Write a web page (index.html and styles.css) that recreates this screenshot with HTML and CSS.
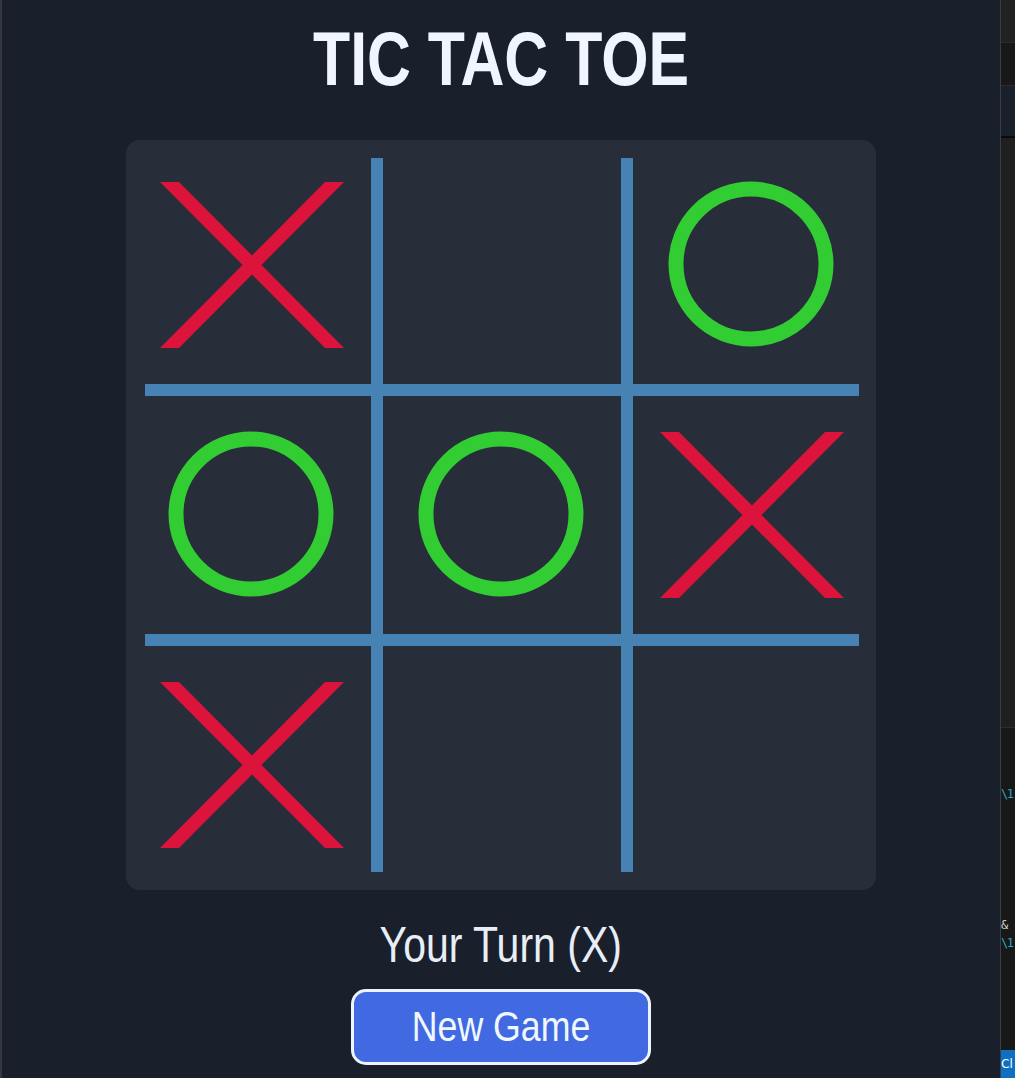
FILE: index.html
```html
<!DOCTYPE html>
<html lang="en">
<head>
<meta charset="utf-8">
<title>Tic Tac Toe</title>
<link rel="stylesheet" href="styles.css">
</head>
<body>
<div class="edge-left"></div>
<main class="app">
  <h1 class="title"><span class="narrow narrow-bold">TIC TAC TOE</span></h1>
  <div class="board">
    <svg class="board-svg" width="750" height="750" viewBox="0 0 750 750" xmlns="http://www.w3.org/2000/svg">
      <g fill="#4682b4">
        <rect x="245" y="18" width="12" height="714"/>
        <rect x="495" y="18" width="12" height="714"/>
        <rect x="19" y="244" width="714" height="12"/>
        <rect x="19" y="494" width="714" height="12"/>
      </g>
      <defs>
        <g id="xmark" fill="#dc143c">
          <polygon points="-92,-83 -73,-83 92,83 73,83"/>
          <polygon points="73,-83 92,-83 -73,83 -92,83"/>
        </g>
        <circle id="omark" r="75" fill="none" stroke="#32cd32" stroke-width="15"/>
      </defs>
      <use href="#xmark" x="126" y="125"/>
      <use href="#omark" x="625" y="124"/>
      <use href="#omark" x="125" y="374"/>
      <use href="#omark" x="375" y="374"/>
      <use href="#xmark" x="626" y="375"/>
      <use href="#xmark" x="126" y="625"/>
    </svg>
  </div>
  <p class="status"><span class="narrow">Your Turn (X)</span></p>
  <button class="new-game" type="button"><span class="narrow narrow-btn">New Game</span></button>
</main>
<aside class="side">
  <div class="band band-a"></div>
  <div class="band band-b"></div>
  <div class="band band-c"></div>
  <div class="band band-d">
    <span class="code c1">\1</span>
    <span class="code c2">&amp;</span>
    <span class="code c3">\1</span>
  </div>
  <div class="statusbar">Cl</div>
</aside>
</body>
</html>
```

FILE: styles.css
```css
html, body {
  margin: 0;
  padding: 0;
  height: 100%;
}

body {
  display: flex;
  width: 1015px;
  height: 1078px;
  overflow: hidden;
  background: #1a1f2c;
  font-family: "Liberation Sans", Arial, sans-serif;
}

.edge-left {
  width: 2px;
  flex: 0 0 2px;
  background: #34373e;
}

.app {
  flex: 0 0 998px;
  display: flex;
  flex-direction: column;
  align-items: center;
  padding-top: 21px;
  box-sizing: border-box;
}

.narrow {
  display: inline-block;
  white-space: nowrap;
  transform: scaleX(0.82);
}

.narrow-bold {
  transform: scaleX(0.8);
}

.narrow-btn {
  transform: scaleX(0.85);
}

.title {
  margin: 0 0 43px;
  font-size: 76px;
  line-height: 1;
  font-weight: 700;
  color: #f0f6ff;
}

.board {
  width: 750px;
  height: 750px;
  background: #282d3a;
  border-radius: 14px;
}

.board-svg {
  display: block;
}

.status {
  margin: 30px 0 19px;
  font-size: 50px;
  line-height: 1;
  color: #e8eef6;
}

.new-game {
  width: 300px;
  height: 76px;
  box-sizing: border-box;
  border: 3px solid #eef4fc;
  border-radius: 15px;
  background: #4169e1;
  color: #f0f8ff;
  font-family: inherit;
  font-size: 42px;
  line-height: 1;
  padding: 0;
}

.side {
  flex: 0 0 14px;
  border-left: 1px solid #3a3d44;
  display: flex;
  flex-direction: column;
  overflow: hidden;
}

.band {
  flex: 0 0 auto;
}

.band-a {
  height: 42px;
  background: #212121;
  border-bottom: 1px solid #2c2c2c;
}

.band-b {
  height: 42px;
  background: #181818;
  border-bottom: 1px solid #2c2c2c;
}

.band-c {
  height: 589px;
  background: #1f1f1f;
  border-top: 2px solid #0a0a0a;
  margin-top: 50px;
  border-bottom: 1px solid #2c2c2c;
}

.band-d {
  flex: 1 1 auto;
  background: #181818;
  display: flex;
  flex-direction: column;
  font-family: "DejaVu Sans Mono", monospace;
  font-size: 12px;
  line-height: 16px;
}

.code {
  display: block;
  color: #2aa6c4;
  white-space: nowrap;
  letter-spacing: -1.5px;
}

.c1 { margin-top: 58px; }
.c2 { margin-top: 115px; color: #d4d4d4; }
.c3 { margin-top: 2px; }

.statusbar {
  height: 28px;
  background: #0e70c0;
  color: #ffffff;
  font-family: "DejaVu Sans", sans-serif;
  font-size: 12px;
  line-height: 28px;
  white-space: nowrap;
  overflow: hidden;
}
```
